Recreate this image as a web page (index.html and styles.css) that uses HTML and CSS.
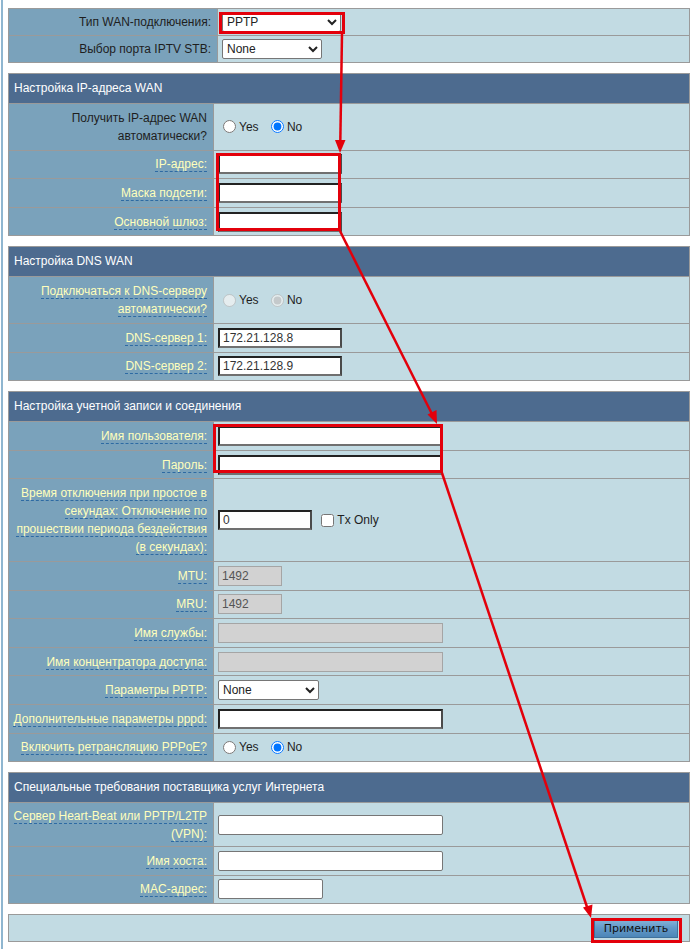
FILE: index.html
```html
<!DOCTYPE html>
<html lang="ru">
<head>
    <meta charset="UTF-8">
    <meta name="viewport" content="width=device-width, initial-scale=1.0">
    <link rel="stylesheet" href="styles.css">
</head>
<body>
<div class="page">

    <table class="form-table compact">
        <colgroup><col class="col-label-wide"><col></colgroup>
        <tr>
            <th>Тип WAN-подключения:</th>
            <td class="pad-sel">
                <select class="sel sel-wan"><option>PPTP</option><option>PPPoE</option><option>L2TP</option></select>
            </td>
        </tr>
        <tr>
            <th>Выбор порта IPTV STB:</th>
            <td class="pad-sel">
                <select class="sel sel-iptv"><option>None</option></select>
            </td>
        </tr>
    </table>

    <table class="form-table">
        <colgroup><col class="col-label"><col></colgroup>
        <tr><td colspan="2" class="head">Настройка IP-адреса WAN</td></tr>
        <tr>
            <th>Получить IP-адрес WAN автоматически?</th>
            <td>
                <label class="opt"><input type="radio" name="wan_auto"> Yes</label>
                <label class="opt"><input type="radio" name="wan_auto" checked> No</label>
            </td>
        </tr>
        <tr>
            <th><span class="hint">IP-адрес:</span></th>
            <td><input type="text" class="inp inp-dark w-ip"></td>
        </tr>
        <tr>
            <th><span class="hint">Маска подсети:</span></th>
            <td><input type="text" class="inp inp-dark w-ip"></td>
        </tr>
        <tr>
            <th><span class="hint">Основной шлюз:</span></th>
            <td><input type="text" class="inp inp-dark w-ip"></td>
        </tr>
    </table>

    <table class="form-table">
        <colgroup><col class="col-label"><col></colgroup>
        <tr><td colspan="2" class="head">Настройка DNS WAN</td></tr>
        <tr>
            <th><span class="hint">Подключаться к DNS-серверу автоматически?</span></th>
            <td>
                <label class="opt"><input type="radio" name="dns_auto" disabled> Yes</label>
                <label class="opt"><input type="radio" name="dns_auto" checked disabled> No</label>
            </td>
        </tr>
        <tr>
            <th><span class="hint">DNS-сервер 1:</span></th>
            <td><input type="text" class="inp inp-dark w-ip" value="172.21.128.8"></td>
        </tr>
        <tr>
            <th><span class="hint">DNS-сервер 2:</span></th>
            <td><input type="text" class="inp inp-dark w-ip" value="172.21.128.9"></td>
        </tr>
    </table>

    <table class="form-table">
        <colgroup><col class="col-label"><col></colgroup>
        <tr><td colspan="2" class="head">Настройка учетной записи и соединения</td></tr>
        <tr>
            <th><span class="hint">Имя пользователя:</span></th>
            <td><input type="text" class="inp inp-dark w-long"></td>
        </tr>
        <tr>
            <th><span class="hint">Пароль:</span></th>
            <td><input type="password" class="inp inp-dark w-long"></td>
        </tr>
        <tr>
            <th><span class="hint">Время отключения при простое в секундах: Отключение по прошествии периода бездействия (в секундах):</span></th>
            <td>
                <input type="text" class="inp inp-dark w-idle" value="0">
                <label class="opt"><input type="checkbox"> Tx Only</label>
            </td>
        </tr>
        <tr>
            <th><span class="hint">MTU:</span></th>
            <td><input type="text" class="inp inp-off w-mtu" value="1492" disabled></td>
        </tr>
        <tr>
            <th><span class="hint">MRU:</span></th>
            <td><input type="text" class="inp inp-off w-mtu" value="1492" disabled></td>
        </tr>
        <tr>
            <th><span class="hint">Имя службы:</span></th>
            <td><input type="text" class="inp inp-off w-long" disabled></td>
        </tr>
        <tr>
            <th><span class="hint">Имя концентратора доступа:</span></th>
            <td><input type="text" class="inp inp-off w-long" disabled></td>
        </tr>
        <tr>
            <th><span class="hint">Параметры PPTP:</span></th>
            <td><select class="sel sel-pptp"><option>None</option><option>MPPE 40</option><option>MPPE 128</option></select></td>
        </tr>
        <tr>
            <th><span class="hint">Дополнительные параметры pppd:</span></th>
            <td><input type="text" class="inp inp-dark w-long"></td>
        </tr>
        <tr>
            <th><span class="hint">Включить ретрансляцию PPPoE?</span></th>
            <td>
                <label class="opt"><input type="radio" name="relay"> Yes</label>
                <label class="opt"><input type="radio" name="relay" checked> No</label>
            </td>
        </tr>
    </table>

    <table class="form-table">
        <colgroup><col class="col-label"><col></colgroup>
        <tr><td colspan="2" class="head">Специальные требования поставщика услуг Интернета</td></tr>
        <tr>
            <th class="tight"><span class="hint">Сервер Heart-Beat или PPTP/L2TP (VPN):</span></th>
            <td><input type="text" class="inp inp-thin w-long"></td>
        </tr>
        <tr>
            <th><span class="hint">Имя хоста:</span></th>
            <td><input type="text" class="inp inp-thin w-long"></td>
        </tr>
        <tr>
            <th><span class="hint">MAC-адрес:</span></th>
            <td><input type="text" class="inp inp-thin w-mac"></td>
        </tr>
    </table>

    <table class="form-table apply-bar">
        <tr>
            <td><button class="btn-apply">Применить</button></td>
        </tr>
    </table>

</div>

<!-- red call-outs drawn over the form -->
<svg class="marks" width="693" height="949" viewBox="0 0 693 949">
    <g fill="none" stroke="#e3000b" stroke-width="3">
        <rect x="220.5" y="13.5" width="123" height="19"/>
        <rect x="217.5" y="154.5" width="122" height="75"/>
        <rect x="214.5" y="425.5" width="227" height="46"/>
        <rect x="592.5" y="919.5" width="88" height="22"/>
    </g>
    <g stroke="#e3000b" stroke-width="2.5">
        <line x1="342" y1="34" x2="340.3" y2="142"/>
        <line x1="340" y1="231" x2="432" y2="414"/>
        <line x1="442" y1="473" x2="587" y2="907"/>
    </g>
    <g fill="#e3000b">
        <polygon points="340,153 335,140 345.5,140"/>
        <polygon points="437,424 427.5,414.5 436.5,410"/>
        <polygon points="591,918 583,907.5 592.5,904.5"/>
    </g>
</svg>
</body>
</html>
```

FILE: styles.css
```css
body {
    margin: 0;
    padding: 0;
    font-family: "Liberation Sans", Arial, sans-serif;
    font-size: 12px;
    color: #1e1e1e;
    background-color: #ffffff;
}

.page {
    min-height: 100vh;
    box-sizing: border-box;
    margin-left: 1px;
    border-left: 2px solid #8fb6d0;
    padding: 8px 3px 4px 5px;
}

.form-table {
    width: 100%;
    border-collapse: collapse;
    table-layout: fixed;
    margin-bottom: 10px;
}

.col-label {
    width: 205px;
}

.col-label-wide {
    width: 209px;
}

.form-table th,
.form-table td {
    border: 1px solid #9a9a9a;
}

.form-table th {
    background-color: #7aa2bb;
    font-weight: normal;
    text-align: right;
    line-height: 18px;
    padding: 4.8px 6px 4.8px 4px;
    color: #1e1e1e;
}

.form-table th.tight {
    padding-top: 3.5px;
    padding-bottom: 3.5px;
}

.form-table td {
    background-color: #c2dbe3;
    padding: 3.8px 4px;
    vertical-align: middle;
    line-height: 18px;
}

.form-table td.head {
    background-color: #4d6b8f;
    color: #ffffff;
    padding: 6px 5px;
    line-height: 17px;
}

.compact th {
    padding: 4px 6px 4px 4px;
}

.compact td.pad-sel {
    padding: 3px 4px 3px 4px;
}

.hint {
    color: #ffffbc;
    border-bottom: 1px dashed #2d6aa3;
}

/* inputs */
.inp {
    box-sizing: border-box;
    height: 20px;
    margin: 0;
    padding: 1px 3px;
    font-family: "Liberation Sans", Arial, sans-serif;
    font-size: 12px;
    color: #333333;
    vertical-align: top;
    background-color: #ffffff;
}

.inp-dark {
    border: 2px solid #222222;
    border-bottom-color: #707070;
    border-right-color: #4a4a4a;
}

.inp-off {
    border: 1px solid #a5a5a5;
    background-color: #d2d2d2;
    color: #555555;
}

.inp-thin {
    border: 1px solid #767676;
    border-radius: 2px;
}

.w-ip { width: 124px; }
.w-long { width: 225px; }
.w-idle { width: 94px; }
.w-mtu { width: 64px; }
.w-mac { width: 105px; }

.sel {
    box-sizing: border-box;
    height: 20px;
    margin: 0;
    font-family: "Liberation Sans", Arial, sans-serif;
    font-size: 12px;
    color: #222222;
    background-color: #ffffff;
    border: 1px solid #767676;
    border-radius: 2px;
    vertical-align: top;
}

.sel-wan { width: 119px; }
.sel-iptv { width: 100px; }
.sel-pptp { width: 101px; }

.opt {
    display: inline-flex;
    align-items: center;
    height: 20px;
    margin-right: 4px;
    color: #1e1e1e;
    vertical-align: top;
}

.opt input {
    margin: 0 3px 0 5px;
}

.opt input[type="checkbox"] {
    margin-left: 6px;
}

.apply-bar td {
    text-align: right;
    padding: 4px 11px 3px 4px;
}

.btn-apply {
    width: 84px;
    height: 19px;
    padding: 0;
    font-family: "DejaVu Sans", Verdana, sans-serif;
    font-size: 11px;
    color: #111111;
    border: 1px solid #3f719c;
    background: linear-gradient(to bottom, #86b3d8, #6399c8 45%, #4d86b8);
    cursor: pointer;
    vertical-align: top;
}

.marks {
    position: absolute;
    top: 0;
    left: 0;
    pointer-events: none;
}
```
